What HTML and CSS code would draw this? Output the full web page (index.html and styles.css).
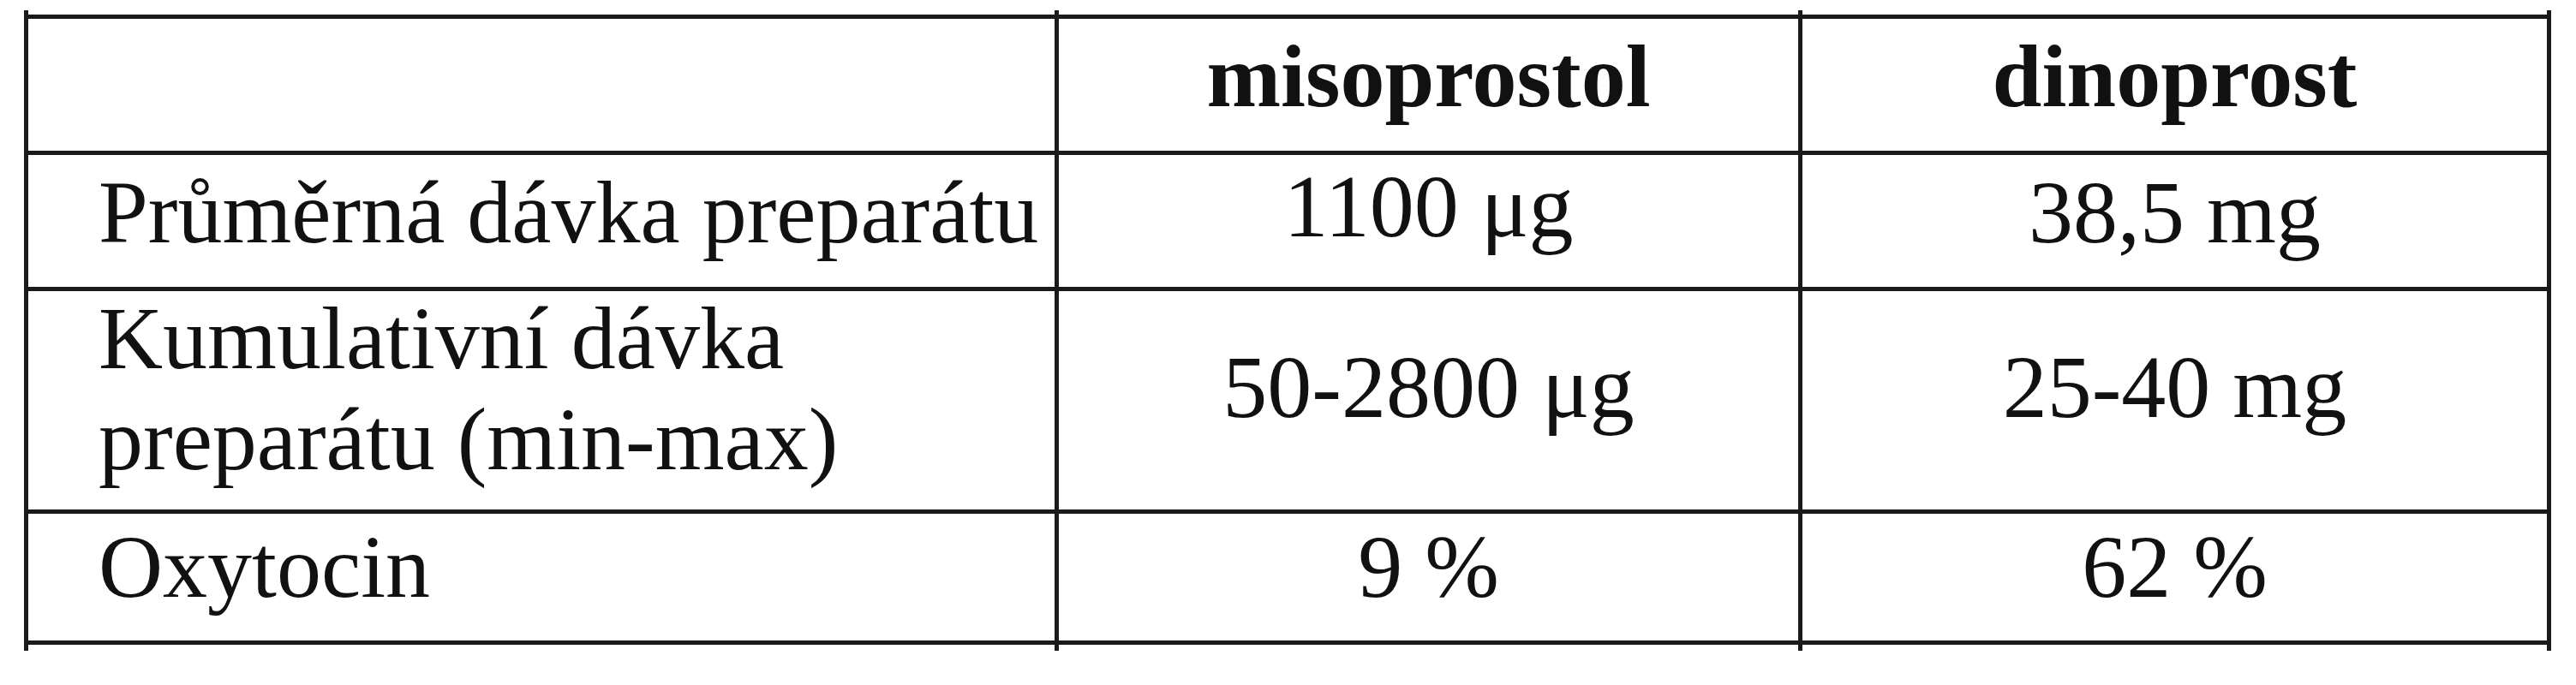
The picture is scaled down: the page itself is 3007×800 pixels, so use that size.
FILE: index.html
```html
<!DOCTYPE html>
<html lang="cs">
<head>
<meta charset="utf-8">
<title>Tabulka</title>
<link rel="stylesheet" href="styles.css">
</head>
<body>
<div class="frame">
  <div class="table">
    <div class="cell head"></div>
    <div class="cell head val">misoprostol</div>
    <div class="cell head val">dinoprost</div>

    <div class="cell r1 label">Průměrná dávka preparátu</div>
    <div class="cell r1 val up">1100 μg</div>
    <div class="cell r1 val">38,5 mg</div>

    <div class="cell r2 label"><div class="pull">Kumulativní dávka<br>preparátu (min-max)</div></div>
    <div class="cell r2 val">50-2800 μg</div>
    <div class="cell r2 val">25-40 mg</div>

    <div class="cell r3 label">Oxytocin</div>
    <div class="cell r3 val">9 %</div>
    <div class="cell r3 val">62 %</div>
  </div>
</div>
</body>
</html>
```

FILE: styles.css
```css
html, body {
  margin: 0;
  padding: 0;
  background: #ffffff;
}

body {
  font-family: "Liberation Serif", "Times New Roman", serif;
  color: #111111;
}

.frame {
  width: 2950px;
  margin: 12px 0 0 28px;
  padding: 5px 0 7px;
  background-image:
    linear-gradient(#1a1a1a, #1a1a1a),
    linear-gradient(#1a1a1a, #1a1a1a),
    linear-gradient(#1a1a1a, #1a1a1a),
    linear-gradient(#1a1a1a, #1a1a1a);
  background-size: 5px 100%;
  background-repeat: no-repeat;
  background-position: 0 0, 1203px 0, 2071px 0, 2945px 0;
}

.table {
  display: grid;
  grid-template-columns: 1198px 863px 869px;
  grid-template-rows: 154px 154px 255px 148px;
  gap: 5px;
  padding: 5px;
  background: #1a1a1a;
}

.cell {
  background: #ffffff;
  font-size: 104px;
  line-height: 118px;
  white-space: nowrap;
  box-sizing: border-box;
}

.label {
  padding-left: 82px;
  text-align: left;
}

.val {
  text-align: center;
}

.head {
  font-weight: bold;
  padding-top: 8px;
}

.r1 {
  padding-top: 8px;
}

.r1.up {
  padding-top: 1px;
}

.r2 {
  padding-top: 0;
}

.r2.val {
  padding-top: 53px;
}

.pull {
  margin-top: -4px;
}

.r3 {
  padding-top: 3px;
}
```
